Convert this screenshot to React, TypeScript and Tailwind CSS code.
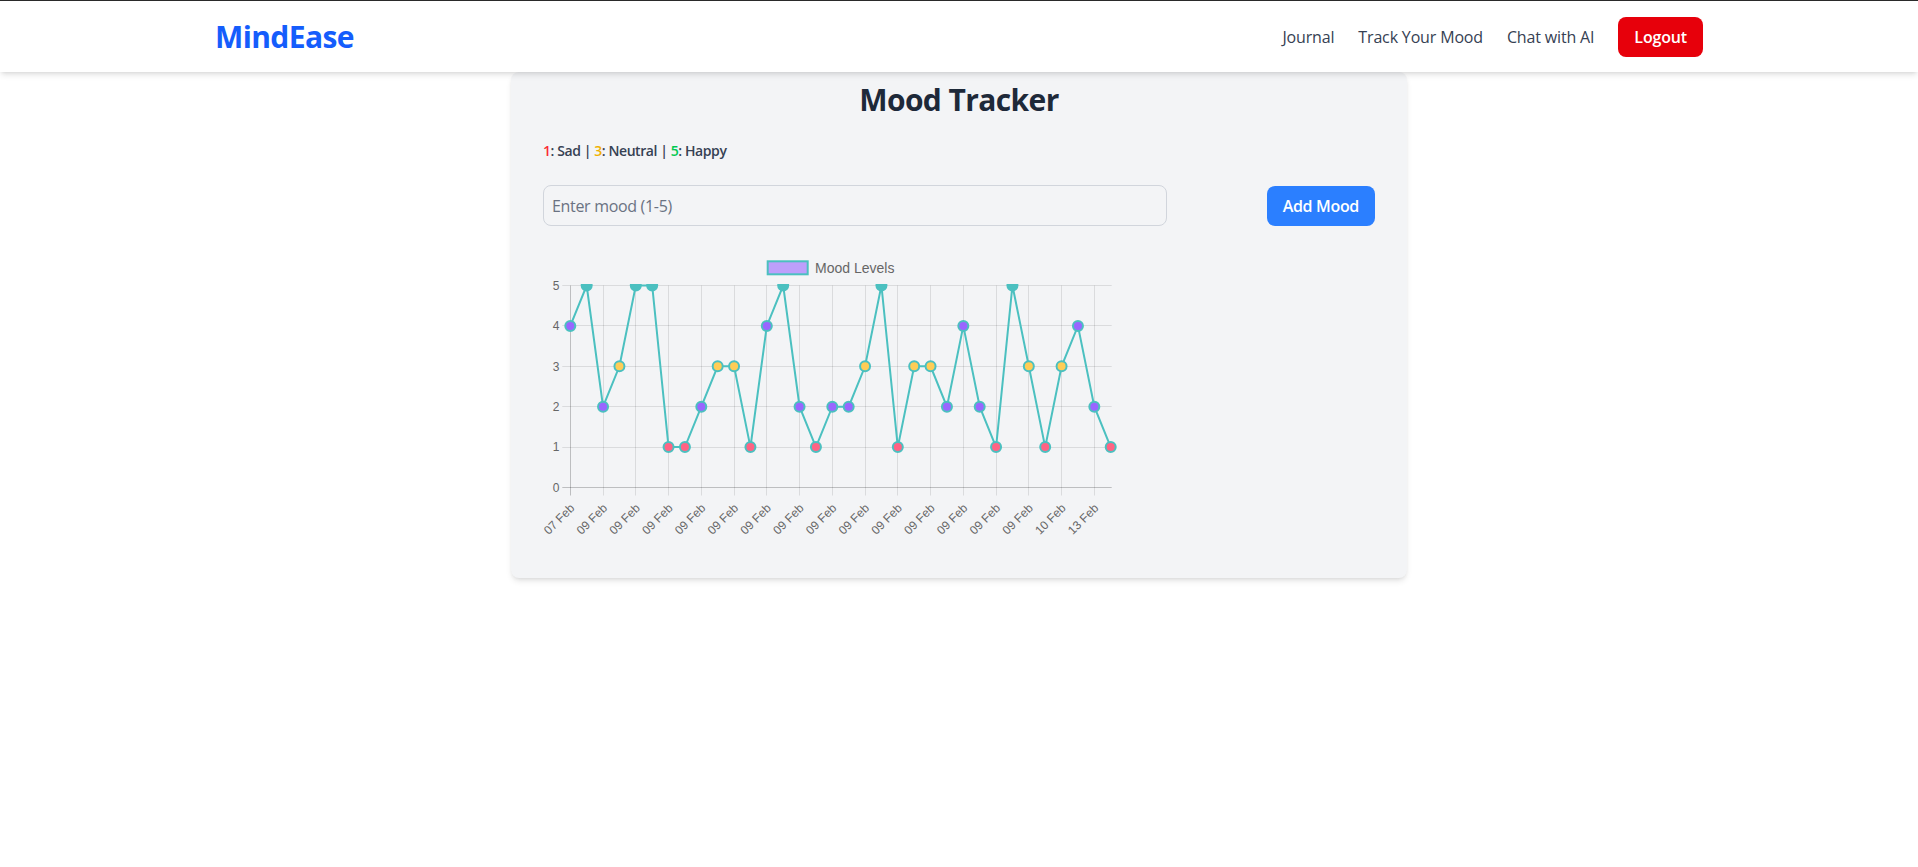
import React from "react";

// Mood values as plotted, one per entry, oldest first.
const MOODS = [4, 5, 2, 3, 5, 5, 1, 1, 2, 3, 3, 1, 4, 5, 2, 1, 2, 2, 3, 5, 1, 3, 3, 2, 4, 2, 1, 5, 3, 1, 3, 4, 2, 1];

const LABELS = MOODS.map((_, i) => {
  if (i === 0) return "07 Feb";
  if (i === 30 || i === 31) return "10 Feb";
  if (i >= 32) return "13 Feb";
  return "09 Feb";
});

const POINT_FILL: Record<number, string> = {
  1: "#ff6384",
  2: "#9966ff",
  3: "#ffcd56",
  4: "#9966ff",
  5: "#4bc0c0",
};

// chart geometry (svg space)
const W = 576;
const H = 296;
const LEFT = 27.3;
const RIGHT = 567.7;
const TOP = 35.5;
const BOTTOM = 237.5;
const STEP = (RIGHT - LEFT) / (MOODS.length - 1);
const UNIT = (BOTTOM - TOP) / 5;

const px = (i: number) => LEFT + i * STEP;
const py = (v: number) => BOTTOM - v * UNIT;
const crisp = (n: number) => Math.round(n - 0.5) + 0.5;

function MoodChart() {
  const grid = "rgba(0,0,0,0.1)";
  const axis = "rgba(0,0,0,0.22)";
  const font = "'Liberation Sans', Arial, sans-serif";
  const line = MOODS.map((v, i) => `${px(i)},${py(v)}`).join(" ");

  return (
    <svg width={W} height={H} viewBox={`0 0 ${W} ${H}`} className="block overflow-visible">
      <defs>
        <clipPath id="chart-clip">
          <rect x={0} y={TOP - 1.5} width={W} height={H} />
        </clipPath>
      </defs>

      {/* legend */}
      <rect x={224.7} y={11.3} width={40} height={13} fill="rgba(153,102,255,0.6)" stroke="#4bc0c0" strokeWidth={2} />
      <text x={272} y={22.8} fontSize={14} fill="#666" fontFamily={font}>
        Mood Levels
      </text>

      {/* horizontal grid + y ticks */}
      {[0, 1, 2, 3, 4, 5].map((v) => (
        <g key={v}>
          <line
            x1={LEFT - 8}
            x2={RIGHT + 1}
            y1={crisp(py(v))}
            y2={crisp(py(v))}
            stroke={v === 0 ? axis : grid}
            strokeWidth={1}
          />
          <text x={16.5} y={py(v) + 4.2} fontSize={12} fill="#666" textAnchor="end" fontFamily={font}>
            {v}
          </text>
        </g>
      ))}

      {/* vertical grid + x ticks, every other label */}
      {MOODS.map((_, i) =>
        i % 2 === 0 ? (
          <g key={i}>
            <line
              x1={crisp(px(i))}
              x2={crisp(px(i))}
              y1={TOP}
              y2={BOTTOM + 8}
              stroke={i === 0 ? axis : grid}
              strokeWidth={1}
            />
            <text
              transform={`translate(${px(i) + 2}, ${BOTTOM + 18.5}) rotate(-45)`}
              fontSize={12}
              fill="#666"
              textAnchor="end"
              dominantBaseline="central"
              fontFamily={font}
            >
              {LABELS[i]}
            </text>
          </g>
        ) : null
      )}

      <g clipPath="url(#chart-clip)">
        <polyline points={line} fill="none" stroke="#4bc0c0" strokeWidth={2} strokeLinejoin="miter" />
        {MOODS.map((v, i) => (
          <circle key={i} cx={px(i)} cy={py(v)} r={5} fill={POINT_FILL[v]} stroke="#4bc0c0" strokeWidth={2} />
        ))}
      </g>
    </svg>
  );
}

export default function App() {
  return (
    <div className="min-h-screen bg-white font-['Open_Sans','Noto_Sans',sans-serif]">
      <nav className="relative z-10 h-[72px] border-t border-[#2a2a2a] bg-white shadow-md">
        <div className="mx-auto flex h-full max-w-[1536px] items-center justify-between px-6">
          <span className="text-3xl font-bold tracking-[-0.02em] text-blue-600">MindEase</span>
          <div className="flex items-center gap-6 text-base font-medium tracking-[-0.01em] text-gray-700">
            <a>Journal</a>
            <a>Track Your Mood</a>
            <a>Chat with AI</a>
            <button className="rounded-lg bg-red-600 px-4 py-2 font-semibold text-white">Logout</button>
          </div>
        </div>
      </nav>

      <main className="mx-auto max-w-4xl rounded-lg bg-gray-100 px-8 pt-[10px] pb-8 shadow-md">
        <h1 className="text-center text-3xl font-bold tracking-[-0.02em] text-gray-800">Mood Tracker</h1>

        <p className="mt-[23px] text-sm font-semibold tracking-[-0.03em] text-gray-700">
          <span className="text-red-500">1</span>: Sad | <span className="text-yellow-500">3</span>: Neutral |{" "}
          <span className="text-green-500">5</span>: Happy
        </p>

        <div className="mt-6 flex items-center justify-between">
          <input
            type="number"
            placeholder="Enter mood (1-5)"
            className="h-[41px] w-3/4 rounded-lg border border-gray-300 px-2 text-base tracking-[-0.02em] text-gray-700 placeholder:text-gray-500"
          />
          <button className="h-10 rounded-lg bg-blue-500 px-4 font-semibold tracking-[-0.02em] text-white">Add Mood</button>
        </div>

        <div className="mt-6">
          <MoodChart />
        </div>
      </main>
    </div>
  );
}
